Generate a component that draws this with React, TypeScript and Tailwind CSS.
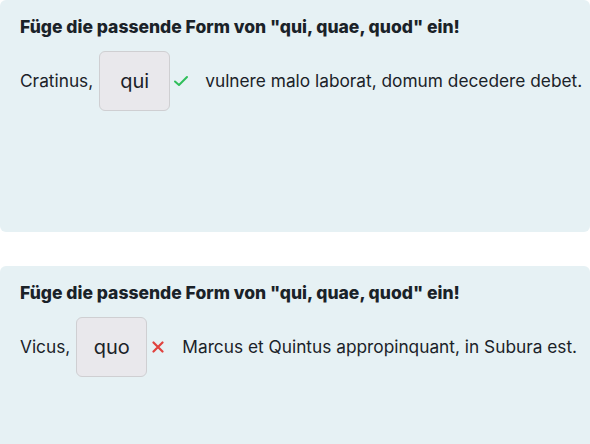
import React from "react";

function Check() {
  return (
    <svg width="16" height="16" viewBox="0 0 16 16" fill="none">
      <path d="M2 8.5 L6 12 L14 4" stroke="#2fbf5a" strokeWidth="2" strokeLinecap="round" strokeLinejoin="round" />
    </svg>
  );
}

function Cross() {
  return (
    <svg width="12" height="12" viewBox="0 0 12 12" fill="none">
      <path d="M1.5 1.5 L10.5 10.5 M10.5 1.5 L1.5 10.5" stroke="#e0423e" strokeWidth="2.2" strokeLinecap="round" />
    </svg>
  );
}

function Card({ before, answer, after, ok }: { before: string; answer: string; after: string; ok: boolean }) {
  return (
    <div className="h-[232px] w-full shrink-0 rounded-md bg-[#e6f1f4] px-5 pt-[17px] text-[#1a2228]" style={{ fontFamily: "Inter, 'Liberation Sans', sans-serif" }}>
      <div className="text-[17.5px] font-extrabold leading-[20px]">Füge die passende Form von "qui, quae, quod" ein!</div>
      <div className="mt-[14px] flex items-center text-[17.3px] leading-[24px]">
        <span className="shrink-0 whitespace-nowrap">{before}</span>
        <div className="ml-[6px] flex h-[60px] w-[71px] shrink-0 items-center justify-center rounded-md border border-[#cfcfd2] bg-[#e9e8ec] text-[20px]">
          {answer}
        </div>
        <div className="ml-[1px] flex w-[20px] shrink-0 items-center justify-center">{ok ? <Check /> : <Cross />}</div>
        <span className="ml-[14px] shrink-0 whitespace-nowrap">{after}</span>
      </div>
    </div>
  );
}

export default function App() {
  return (
    <div className="flex h-[444px] w-[590px] flex-col gap-[34px] overflow-hidden bg-white">
      <Card before="Cratinus," answer="qui" after="vulnere malo laborat, domum decedere debet." ok={true} />
      <Card before="Vicus," answer="quo" after="Marcus et Quintus appropinquant, in Subura est." ok={false} />
    </div>
  );
}
